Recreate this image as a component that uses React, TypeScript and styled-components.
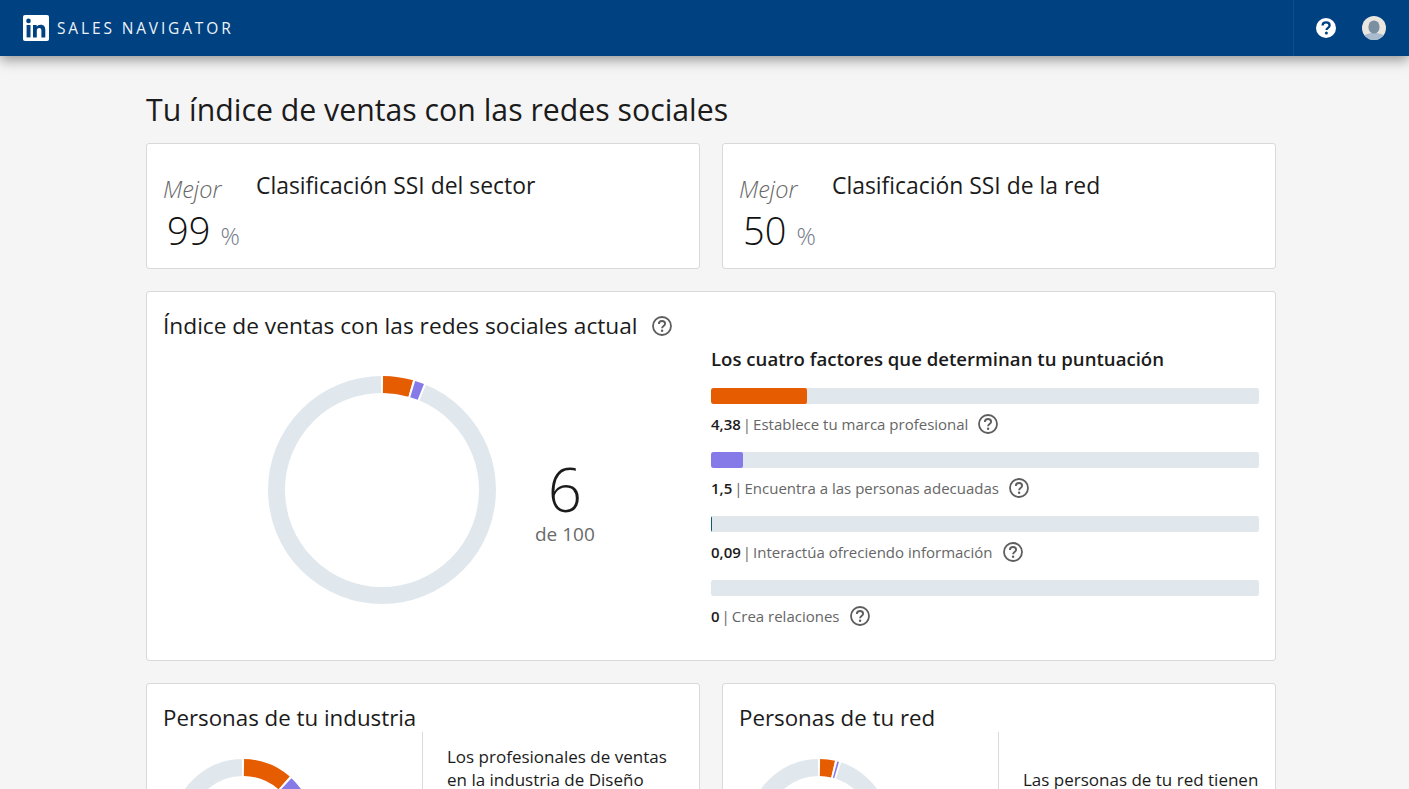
import React from "react";
import styled, { createGlobalStyle } from "styled-components";

const GlobalStyle = createGlobalStyle`
  html, body {
    margin: 0;
    padding: 0;
    height: 100%;
    overflow: hidden;
    background: #f5f5f5;
    font-family: "Open Sans", "Noto Sans", "Liberation Sans", sans-serif;
    color: #1b1b1b;
  }
  * { box-sizing: border-box; }
`;

type Segment = { value: number; color: string };

const ORANGE = "#e65c00";
const PURPLE = "#8679e8";
const TRACK = "#e1e8ed";

// Ring drawn with pathLength so the values map straight to percentages
const Ring: React.FC<{ size: number; stroke: number; segments: Segment[] }> = ({ size, stroke, segments }) => {
  const r = (size - stroke) / 2;
  const c = size / 2;
  // white gap of about 2px whatever the ring size
  const gap = (2 / (2 * Math.PI * r)) * 100;
  let offset = gap / 2;
  return (
    <svg width={size} height={size} viewBox={`0 0 ${size} ${size}`} style={{ display: "block", transform: "rotate(-90deg)" }}>
      <circle cx={c} cy={c} r={r} fill="none" stroke={TRACK} strokeWidth={stroke} />
      {segments.map((s) => {
        const start = offset;
        offset += s.value + gap;
        return (
          <g key={s.color}>
            <circle cx={c} cy={c} r={r} fill="none" stroke="#fff" strokeWidth={stroke + 1} pathLength={100}
              strokeDasharray={`${s.value + gap * 2} ${100 - s.value - gap * 2}`} strokeDashoffset={-start + gap} />
            <circle cx={c} cy={c} r={r} fill="none" stroke={s.color} strokeWidth={stroke} pathLength={100}
              strokeDasharray={`${s.value} ${100 - s.value}`} strokeDashoffset={-start} />
          </g>
        );
      })}
    </svg>
  );
};

const HelpIcon: React.FC = () => (
  <svg width="20" height="20" viewBox="0 0 20 20" fill="none" style={{ display: "block", flexShrink: 0 }}>
    <circle cx="10" cy="10" r="9" stroke="#5e5e5e" strokeWidth="1.8" />
    <path d="M6.9 7.9c0-1.8 1.4-2.9 3.1-2.9s3.1 1 3.1 2.7c0 2.4-3 2.3-3 4.6" stroke="#5e5e5e" strokeWidth="1.9" />
    <circle cx="10.1" cy="14.8" r="1.2" fill="#5e5e5e" />
  </svg>
);

const factors = [
  { score: "4,38", label: "Establece tu marca profesional", pct: 17.5, color: ORANGE },
  { score: "1,5", label: "Encuentra a las personas adecuadas", pct: 5.9, color: PURPLE },
  { score: "0,09", label: "Interactúa ofreciendo información", pct: 0.18, color: "#0b5f6e" },
  { score: "0", label: "Crea relaciones", pct: 0, color: "#0b5f6e" },
];

export default function App() {
  return (
    <Styled.Page>
      <GlobalStyle />
      <Styled.Header>
        <Styled.Brand>
          <svg width="26" height="26" viewBox="0 0 26 26" style={{ display: "block" }}>
            <rect width="26" height="26" rx="2" fill="#fff" />
            <rect x="3.6" y="10" width="3.9" height="12.4" fill="#004182" />
            <circle cx="5.5" cy="5.9" r="2.3" fill="#004182" />
            <path d="M10 10h3.7v1.8c.7-1.2 2-2.1 3.9-2.1 3.5 0 4.7 2.2 4.7 5.5v7.2h-3.9v-6.4c0-1.6-.4-3-2.1-3-1.8 0-2.5 1.3-2.5 3v6.4H10z" fill="#004182" />
          </svg>
          <Styled.BrandName>SALES NAVIGATOR</Styled.BrandName>
        </Styled.Brand>
        <Styled.HeaderActions>
          <svg width="22" height="22" viewBox="0 0 22 22" style={{ display: "block" }}>
            <circle cx="11" cy="11" r="10" fill="#fff" />
            <path d="M7.6 8.6c0-2 1.5-3.2 3.5-3.2s3.5 1.1 3.5 3c0 2.6-3.1 2.4-3.1 4.6" fill="none" stroke="#004182" strokeWidth="2.3" />
            <circle cx="11.4" cy="15.9" r="1.5" fill="#004182" />
          </svg>
          <svg width="24" height="24" viewBox="0 0 24 24" style={{ display: "block" }}>
            <clipPath id="avatar"><circle cx="12" cy="12" r="12" /></clipPath>
            <g clipPath="url(#avatar)">
              <rect width="24" height="24" fill="#e9e5df" />
              <path d="M0 24c0-5 5-7 12-7s12 2 12 7z" fill="#a9bccd" />
              <ellipse cx="12" cy="11" rx="5.6" ry="6.6" fill="#7b8fa3" />
            </g>
          </svg>
        </Styled.HeaderActions>
      </Styled.Header>

      <Styled.Main>
        <Styled.Title>Tu índice de ventas con las redes sociales</Styled.Title>
        <Styled.TwoCols>
          <Styled.RankCard>
            <Styled.RankScore>
              <Styled.Best>Mejor</Styled.Best>
              <Styled.Percent>99<small>%</small></Styled.Percent>
            </Styled.RankScore>
            <Styled.RankTitle>Clasificación SSI del sector</Styled.RankTitle>
          </Styled.RankCard>
          <Styled.RankCard>
            <Styled.RankScore>
              <Styled.Best>Mejor</Styled.Best>
              <Styled.Percent>50<small>%</small></Styled.Percent>
            </Styled.RankScore>
            <Styled.RankTitle>Clasificación SSI de la red</Styled.RankTitle>
          </Styled.RankCard>
        </Styled.TwoCols>

        <Styled.ScoreCard>
          <Styled.CardHeading>
            Índice de ventas con las redes sociales actual
            <HelpIcon />
          </Styled.CardHeading>
          <Styled.ScoreBody>
            <Styled.RingSide>
              <Ring size={228} stroke={17} segments={[{ value: 4.25, color: ORANGE }, { value: 1.3, color: PURPLE }]} />
              <Styled.Total>
                <strong>6</strong>
                <span>de 100</span>
              </Styled.Total>
            </Styled.RingSide>
            <Styled.Factors>
              <h3>Los cuatro factores que determinan tu puntuación</h3>
              {factors.map((f) => (
                <Styled.Factor key={f.label}>
                  <Styled.Bar>
                    <Styled.BarFill $color={f.color} style={{ width: `${f.pct}%` }} />
                  </Styled.Bar>
                  <Styled.FactorLabel>
                    <span><b>{f.score}</b><i>|</i>{f.label}</span>
                    <HelpIcon />
                  </Styled.FactorLabel>
                </Styled.Factor>
              ))}
            </Styled.Factors>
          </Styled.ScoreBody>
        </Styled.ScoreCard>

        <Styled.TwoCols>
          <Styled.PeopleCard>
            <Styled.PeopleTitle>Personas de tu industria</Styled.PeopleTitle>
            <Styled.PeopleBody>
              <Styled.PeopleRing>
                <Ring size={142} stroke={17} segments={[{ value: 11.2, color: ORANGE }, { value: 5, color: PURPLE }]} />
              </Styled.PeopleRing>
              <Styled.PeopleText $top={13}>
                Los profesionales de ventas en la industria de Diseño
              </Styled.PeopleText>
            </Styled.PeopleBody>
          </Styled.PeopleCard>
          <Styled.PeopleCard>
            <Styled.PeopleTitle>Personas de tu red</Styled.PeopleTitle>
            <Styled.PeopleBody>
              <Styled.PeopleRing>
                <Ring size={142} stroke={17} segments={[{ value: 3.4, color: ORANGE }, { value: 0.4, color: PURPLE }]} />
              </Styled.PeopleRing>
              <Styled.PeopleText $top={36}>
                Las personas de tu red tienen
              </Styled.PeopleText>
            </Styled.PeopleBody>
          </Styled.PeopleCard>
        </Styled.TwoCols>
      </Styled.Main>
    </Styled.Page>
  );
}

const Card = styled.section`
  background: #fff;
  border: 1px solid #d9d9d9;
  border-radius: 3px;
`;

const Styled = {
  Page: styled.div`
    min-height: 100vh;
    background: #f5f5f5;
  `,
  Header: styled.header`
    height: 56px;
    background: #004182;
    display: flex;
    align-items: center;
    justify-content: space-between;
    box-shadow: 0 4px 12px rgba(0, 0, 0, 0.4);
    position: relative;
  `,
  Brand: styled.div`
    display: flex;
    align-items: center;
    gap: 8px;
    padding-left: 23px;
  `,
  BrandName: styled.span`
    color: #eef3f8;
    font-size: 15.5px;
    letter-spacing: 2.85px;
  `,
  HeaderActions: styled.div`
    height: 100%;
    width: 116px;
    display: flex;
    align-items: center;
    gap: 25px;
    padding-left: 21px;
    border-left: 1px solid #0f4d8c;
  `,
  Main: styled.main`
    width: 1130px;
    margin-left: 146px;
    padding-top: 32px;
    display: flex;
    flex-direction: column;
    gap: 22px;
  `,
  Title: styled.h1`
    margin: 1px 0 -10px;
    font-size: 30.25px;
    line-height: 42px;
    font-weight: 400;
  `,
  TwoCols: styled.div`
    display: grid;
    grid-template-columns: 554px 554px;
    gap: 22px;
  `,
  RankCard: styled(Card)`
    height: 126px;
    padding: 26px 16px 0;
    display: flex;
    gap: 15px;
  `,
  RankScore: styled.div`
    width: 78px;
    padding-top: 5px;
  `,
  Best: styled.div`
    font-size: 23.5px;
    line-height: 28px;
    font-style: italic;
    font-weight: 300;
    color: #666;
  `,
  Percent: styled.div`
    margin-top: 2px;
    font-size: 38px;
    line-height: 50px;
    font-weight: 300;
    color: #111;
    padding-left: 4px;
    white-space: nowrap;
    small {
      font-size: 24px;
      color: #737b88;
      margin-left: 10px;
    }
  `,
  RankTitle: styled.h2`
    margin: 0;
    font-size: 22.9px;
    line-height: 32px;
    font-weight: 400;
  `,
  ScoreCard: styled(Card)`
    height: 370px;
    padding: 18px 16px 0;
  `,
  CardHeading: styled.h2`
    margin: 0;
    display: flex;
    align-items: center;
    gap: 14px;
    font-size: 22.7px;
    line-height: 32px;
    font-weight: 400;
  `,
  ScoreBody: styled.div`
    display: flex;
  `,
  RingSide: styled.div`
    width: 548px;
    padding: 34px 0 0 105px;
    display: flex;
    align-items: flex-start;
    gap: 39px;
  `,
  Total: styled.div`
    padding-top: 81px;
    display: flex;
    flex-direction: column;
    align-items: center;
    strong {
      font-size: 60px;
      line-height: 65px;
      font-weight: 300;
    }
    span {
      font-size: 19px;
      line-height: 24px;
      color: #6a6a6a;
    }
  `,
  Factors: styled.div`
    flex: 1;
    padding-top: 2px;
    h3 {
      margin: 0 0 14px;
      font-size: 18.6px;
      line-height: 30px;
      font-weight: 600;
    }
  `,
  Factor: styled.div`
    height: 64px;
  `,
  Bar: styled.div`
    height: 16px;
    background: ${TRACK};
    border-radius: 2px;
    overflow: hidden;
  `,
  BarFill: styled.div<{ $color: string }>`
    height: 100%;
    background: ${(p) => p.$color};
    border-radius: 2px;
  `,
  FactorLabel: styled.div`
    display: flex;
    align-items: center;
    gap: 10px;
    margin-top: 10px;
    font-size: 15px;
    line-height: 20px;
    color: #666;
    b {
      font-weight: 600;
      color: #1b1b1b;
    }
    i {
      font-style: normal;
      margin: 0 2px;
    }
  `,
  PeopleCard: styled(Card)`
    height: 280px;
    padding: 19px 16px 0;
  `,
  PeopleTitle: styled.h2`
    margin: 0 0 -1px;
    font-size: 22.3px;
    line-height: 30px;
    font-weight: 400;
  `,
  PeopleBody: styled.div`
    display: flex;
  `,
  PeopleRing: styled.div`
    flex: 0 0 260px;
    height: 230px;
    padding: 27px 0 0 9px;
    border-right: 1px solid #d9d9d9;
  `,
  PeopleText: styled.p<{ $top: number }>`
    flex: 1;
    margin: 0;
    padding: ${(p) => p.$top}px 0 0 24px;
    font-size: 17px;
    line-height: 23px;
  `,
};
